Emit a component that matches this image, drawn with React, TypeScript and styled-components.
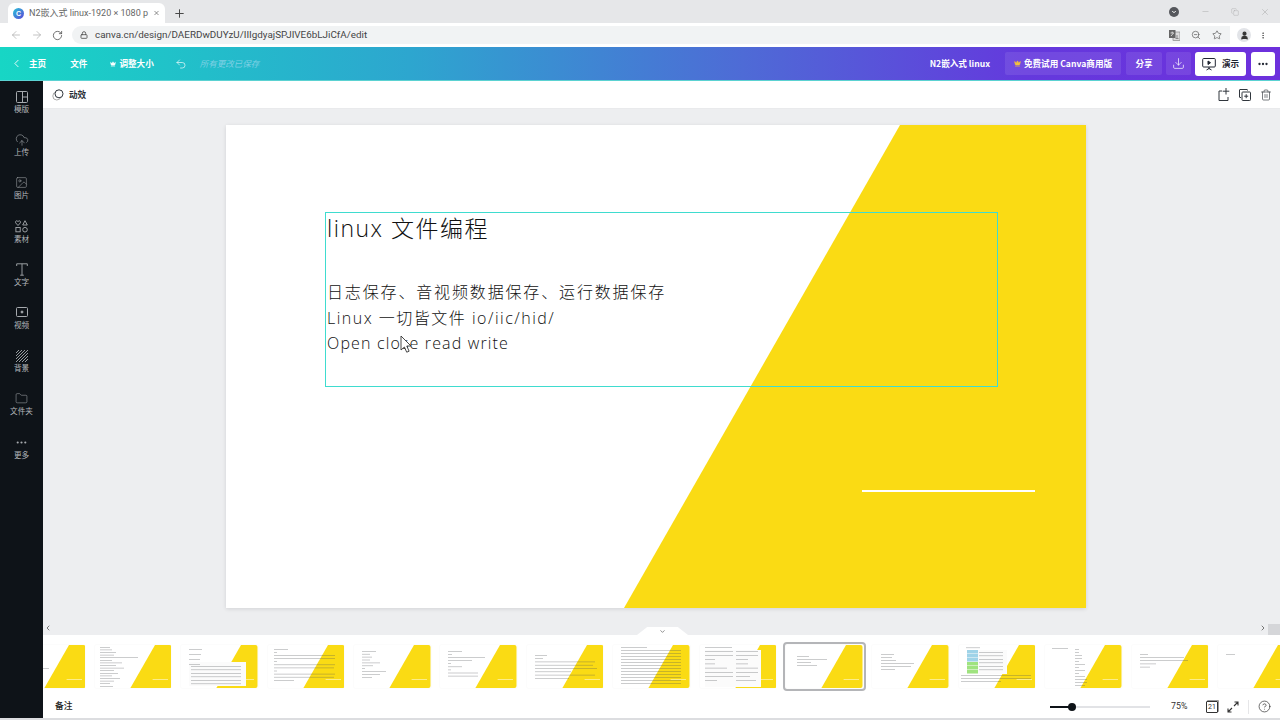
import React from "react";
import styled, { createGlobalStyle } from "styled-components";
import {
  ArrowLeft, ArrowRight, RotateCw, Lock, ZoomOut, Star, User, EllipsisVertical, Plus, X, Minus,
  ChevronLeft, ChevronRight, ChevronDown, Crown, Undo2, Download, Ellipsis, CloudUpload, Image as ImageIcon, Folder,
  Trash2, CircleHelp, Copy,
} from "lucide-react";

const UI = `"Noto Sans CJK SC", "Noto Sans", sans-serif`;
const Global = createGlobalStyle`
  html, body { margin: 0; padding: 0; background: #fff; }
  body { font-family: "Open Sans", ${UI}; overflow: hidden; }
  * { box-sizing: border-box; }
`;

const Page = styled.div`width: 1280px; height: 720px; display: flex; flex-direction: column; overflow: hidden; background: #dcdde0;`;

/* browser chrome */
const TabStrip = styled.div`height: 23px; background: #e6e7e9; display: flex; align-items: flex-end; padding-left: 8px; color: #555;`;
const Tab = styled.div`width: 157px; height: 20px; background: #fff; border-radius: 6px 6px 0 0; display: flex; align-items: center; padding: 0 5px; gap: 5px;`;
const Favicon = styled.div`width: 11px; height: 11px; border-radius: 50%; background: linear-gradient(135deg, #27c4d8, #5b45d8); color: #fff; font: 700 7px/11px "Liberation Sans", sans-serif; text-align: center; flex: none;`;
const TabTitle = styled.div`flex: 1; font: 400 9px/20px "Roboto", ${UI}; color: #666; white-space: nowrap;`;
const NewTab = styled.div`margin: 0 0 3px 8px; display: flex; color: #444;`;
const Spring = styled.div`flex: 1;`;
const WinControls = styled.div`display: flex; align-items: center; height: 23px; color: #999;`;
const ProfileDot = styled.div`width: 10px; height: 10px; border-radius: 50%; background: #55575c; margin-right: 11px; display: flex; align-items: center; justify-content: center; color: #fff;`;
const WinBtn = styled.div`width: 30px; display: flex; justify-content: center;`;

const AddressBar = styled.div`height: 24px; background: #fff; display: flex; align-items: center; color: #777; padding: 0 10px 0 5px;`;
const NavIcon = styled.div<{ $w?: number }>`width: ${(p) => p.$w ?? 21}px; display: flex; justify-content: center; flex: none;`;
const UrlField = styled.div`margin-left: 4px; width: 1158px; height: 18px; border-radius: 9px 0 0 9px; background: #f1f3f4; display: flex; align-items: center; padding: 0 3px 0 8px; color: #555;`;
const UrlText = styled.div`margin-left: 7px; font: 400 9.85px/18px "Roboto", sans-serif; color: #444;`;
const Avatar = styled.div`width: 14px; height: 14px; border-radius: 50%; background: #e2e4e8; display: flex; align-items: center; justify-content: center; color: #333; margin: 0 8px 0 7px; flex:none;`;

/* canva top bar */
const TopBar = styled.div`height: 34px; background: linear-gradient(90deg, #17d6c5 0%, #2da6cf 32%, #4e6bd6 58%, #6439dd 80%, #6d30dc 100%); display: flex; align-items: center; color: #fff; font: 700 8.6px/1 ${UI}; padding: 0 5px 0 10px; border-bottom: 1px solid #5bd2d2;`;
const TopItem = styled.div<{ $left?: number }>`display: flex; align-items: center; gap: 3px; margin-left: ${(p) => p.$left ?? 0}px; white-space: nowrap;`;
const Saved = styled.div`margin-left: 13px; font: italic 400 8.5px/1 ${UI}; color: #7fd0e4; white-space: nowrap;`;
const TopBtn = styled.div<{ $w: number; $left?: number }>`width: ${(p) => p.$w}px; margin-left: ${(p) => p.$left ?? 4}px; height: 23px; border-radius: 2px; background: rgba(255,255,255,.09); display: flex; align-items: center; justify-content: center; gap: 3px; white-space: nowrap;`;
const WhiteBtn = styled.div<{ $w: number; $left?: number }>`width: ${(p) => p.$w}px; margin-left: ${(p) => p.$left ?? 4}px; height: 24px; border-radius: 3px; background: #fff; color: #1f2430; display: flex; align-items: center; justify-content: center; gap: 6px;`;

/* body */
const Body = styled.div`height: 637px; display: flex;`;
const Sidebar = styled.nav`width: 43px; background: #0e1318; flex: none;`;
const SideItem = styled.div`height: 43.2px; padding-top: 9px; display: flex; flex-direction: column; align-items: center; color: #a6aaae;`;
const SideIcon = styled.div`height: 13px; display: flex; align-items: center; justify-content: center;`;
const SideLabel = styled.div`font: 400 7.6px/11px ${UI}; color: #b4b7bb; white-space: nowrap;`;

const Main = styled.main`flex: 1; min-width: 0; display: flex; flex-direction: column;`;
const ContextBar = styled.div`height: 28px; background: #fff; border-bottom: 1px solid #e9eaec; display: flex; align-items: center; padding: 0 8px 0 9px; color: #30363d; flex: none;`;
const Effect = styled.div`display: flex; align-items: center; gap: 5px; font: 700 8.6px/1 ${UI}; color: #2a2f36;`;
const ContextIcons = styled.div`margin-left: auto; display: flex; gap: 9px; align-items: center;`;

const Stage = styled.div`position: relative; height: 526px; background: #edeef0; padding: 16px 0 0 183px; flex: none;`;
const Slide = styled.section`position: relative; width: 860px; height: 483px; background: #fff; box-shadow: 0 1px 4px rgba(14,19,24,.12); padding: 87px 0 0 99px;`;
const Art = styled.svg`position: absolute; inset: 0; width: 100%; height: 100%;`;
const TextFrame = styled.div`position: relative; width: 673px; height: 175px; border: 1px solid #3fdccf; padding-left: 1px; color: #111; font-family: "Open Sans", ${UI}; font-weight: 300;`;
const Title = styled.div`font-size: 23px; line-height: 30px; letter-spacing: 1.5px; white-space: nowrap;`;
const Line = styled.div<{ $ls: number }>`font-size: 16px; line-height: 25.5px; letter-spacing: ${(p) => p.$ls}px; white-space: nowrap;`;
const Lines = styled.div`margin-top: 37px;`;
const Pointer = styled.svg`position: absolute; left: 74px; top: 122px; width: 13px; height: 19px;`;

const ScrollArrow = styled.div<{ $side: string }>`position: absolute; bottom: 1px; ${(p) => p.$side}: 1px; color: #777; display: flex; align-items: center; height: 12px;`;
const ScrollThumb = styled.div`position: absolute; right: 0; bottom: 0; width: 12px; height: 11px; background: #d5d6d9;`;
const Handle = styled.div`position: absolute; left: 594px; bottom: 0; width: 51px; height: 8px; background: #fff; clip-path: polygon(0 100%, 20% 0, 80% 0, 100% 100%); color: #444; display: flex; justify-content: center; align-items: flex-end;`;

const Strip = styled.div`height: 60px; background: #fff; overflow: hidden; flex: none; padding-top: 10px;`;
const ThumbRow = styled.div`display: flex; gap: 9.9px; margin-left: -34.5px; width: max-content;`;
const ThumbBox = styled.div<{ $active?: boolean }>`width: 76.5px; height: 43px; flex: none; background: #fff; box-shadow: 0 0 2px rgba(14,19,24,.06); outline: ${(p) => (p.$active ? "2px solid #b4b5b8" : "none")}; outline-offset: 1px; border-radius: 1px;`;
const ThumbSvg = styled.svg`display: block; width: 100%; height: 100%;`;

const Footer = styled.div`height: 23px; background: #fff; display: flex; align-items: center; padding: 0 9px 0 12px; color: #333; flex: none;`;
const Notes = styled.div`font: 500 8.8px/1 ${UI}; color: #222;`;
const ZoomTrack = styled.div`margin-left: auto; width: 100px; height: 2px; background: #e2e3e6; position: relative;`;
const ZoomFill = styled.div`width: 22px; height: 2px; background: #0e1318;`;
const ZoomKnob = styled.div`position: absolute; left: 18px; top: -3px; width: 8px; height: 8px; border-radius: 50%; background: #0e1318;`;
const ZoomValue = styled.div`margin-left: 21px; width: 16px; font: 400 8.8px/1 "Roboto", sans-serif; color: #333; white-space: nowrap;`;
const PageCount = styled.div`margin-left: 19px; width: 12px; height: 12px; border: 1px solid #333; border-radius: 1px; font: 400 7px/10px "Roboto", sans-serif; text-align: center; box-shadow: 1px -1px 0 #999;`;
const FootIcon = styled.div<{ $left: number }>`margin-left: ${(p) => p.$left}px; display: flex;`;
const Divider = styled.div`width: 1px; height: 14px; background: #e6e6e8; margin-left: 9px;`;

/* drawings */
const TemplatesIcon = () => (
  <svg width="12" height="12" viewBox="0 0 12 12" fill="none" stroke="currentColor"><rect x=".5" y=".5" width="11" height="11" rx="1" /><path d="M6.5 .5v11M6.5 6h5" /></svg>
);
const ElementsIcon = () => (
  <svg width="13" height="13" viewBox="0 0 13 13" fill="none" stroke="currentColor" strokeWidth=".9"><path d="M3 5.5 .7 2.9C0 1.8 1 .6 2 .8c.5.1.8.4 1 .8.2-.4.5-.7 1-.8 1-.2 2 1 1.3 2.1z" /><path d="M10 .7l2.3 4.3H7.7z" /><rect x=".9" y="7.5" width="4.3" height="4.3" /><circle cx="10" cy="9.7" r="2.3" /></svg>
);
const TextIcon = () => (
  <svg width="12" height="13" viewBox="0 0 12 13" fill="none" stroke="currentColor" strokeWidth=".9"><path d="M.7 3V.8h10.6V3M6 .8v11.4M4.2 12.2h3.6" /></svg>
);
const VideoIcon = () => (
  <svg width="12" height="10" viewBox="0 0 12 10" fill="none" stroke="currentColor"><rect x=".5" y=".5" width="11" height="9" rx="1" /><circle cx="6" cy="5" r="1" fill="currentColor" /></svg>
);
const HatchIcon = () => (
  <svg width="12" height="12" viewBox="0 0 12 12" stroke="currentColor" strokeWidth=".9"><path d="M0 3 3 0M0 6 6 0M0 9 9 0M0 12 12 0M3 12 12 3M6 12 12 6M9 12 12 9" /></svg>
);
const EffectIcon = () => (
  <svg width="12" height="12" viewBox="0 0 12 12" fill="none"><circle cx="4.8" cy="7" r="4" stroke="#aaa" /><circle cx="7" cy="4.8" r="4" fill="#fff" stroke="#30363d" /></svg>
);
const AddPageIcon = () => (
  <svg width="12" height="13" viewBox="0 0 12 13" fill="none" stroke="currentColor"><path d="M4 3H1v9.5h9V9M8 0v6.5M4.7 3.2h6.6" /></svg>
);
const DuplicateIcon = () => (
  <svg width="12" height="12" viewBox="0 0 12 12" fill="none" stroke="currentColor"><path d="M8.5 1.5V1a.5.5 0 0 0-.5-.5H1A.5.5 0 0 0 .5 1v7a.5.5 0 0 0 .5.5h1" /><rect x="3" y="3" width="8.5" height="8.5" rx=".8" /><path d="M7.2 5.2v4M5.2 7.2h4" /></svg>
);
const PresentIcon = () => (
  <svg width="14" height="14" viewBox="0 0 14 14" fill="none" stroke="currentColor"><rect x=".7" y="1.5" width="12.6" height="8.5" rx="1" /><path d="M6 4l2.5 1.7L6 7.5z" fill="currentColor" /><path d="M7 10v2M4.5 13 7 11.5 9.5 13" /></svg>
);
const TranslateIcon = () => (
  <svg width="11" height="11" viewBox="0 0 11 11" style={{ marginRight: 5 }}><rect x="4" y="2" width="7" height="8.5" fill="#ddd" stroke="#777" strokeWidth=".6" /><rect x="0" y="0" width="6.5" height="8" fill="#666" /><path d="M1.5 3h3.5M3.2 1.6v1.4M2 6l2.4-2.8" stroke="#fff" strokeWidth=".7" /><path d="M6.5 8.5h3M8 5v3" stroke="#666" strokeWidth=".7" /></svg>
);
const ExpandDiagonalIcon = () => (
  <svg width="12" height="12" viewBox="0 0 12 12" fill="none" stroke="currentColor" strokeWidth="1.1"><path d="M7 5l4-4M7.5 1H11v3.5M5 7l-4 4M1 7.5V11h3.5" /></svg>
);

type TextLine = [number, number, number];
type Cell = [number, number, number, number, string];
const para = (x: number, y: number, step: number, widths: number[]): TextLine[] => widths.map((w, i) => [x, y + i * step, w]);
const thumbs: { lines: TextLine[]; cover?: [number, number, number, number]; cells?: Cell[] }[] = [
  { lines: para(0, 23, 3, [40, 30, 26]) },
  { lines: para(5, 2, 2.6, [10, 12, 16, 14, 38, 12, 22, 16, 24, 14, 18, 12, 20, 14, 10, 13]) },
  { lines: [...para(8, 4, 5, [13, 12, 11, 11]), ...para(10, 21, 3.5, [50, 50, 50, 50, 50, 50])], cover: [8, 17, 57, 24] },
  { lines: para(6, 4, 3.1, [14, 3, 61, 61, 3, 61, 60, 3, 61, 60, 20]) },
  { lines: para(8, 6, 2.9, [14, 8, 10, 8, 18, 11, 3, 24, 18, 10]) },
  { lines: para(8, 6, 3.1, [14, 4, 37, 24, 3, 14, 3, 30, 30]) },
  { lines: para(8, 10, 3.3, [12, 8, 60, 58, 62, 36, 60, 34]) },
  { lines: para(8, 2, 3, [26, 60, 60, 60, 60, 60, 60, 60, 60, 60, 60, 60, 60]) },
  { lines: [...para(5, 2, 3.4, [27]), ...para(5, 6, 4.2, [28, 28, 10, 10, 22, 28, 28, 12]), ...para(36, 6, 4.2, [22, 22, 12, 12, 22, 22, 14, 20])], cover: [5, 5, 56, 37] },
  { lines: para(11, 11, 3, [12, 30, 14, 20]) },
  { lines: para(9, 9, 3, [13, 11, 15, 33, 30, 14]) },
  {
    lines: [...para(7, 2.5, 3, [14]), ...para(20, 7, 3.5, [24, 24, 24, 24, 24, 24]), ...para(2, 30, 3, [70, 70, 40])],
    cover: [8, 5, 40, 24],
    cells: [
      [8, 5, 11, 3.5, "#9fd3e8"], [8, 9, 11, 3.5, "#9fd3e8"], [8, 13, 11, 3.5, "#9fd3e8"],
      [8, 17, 11, 3.5, "#9fe37f"], [8, 21, 11, 3.5, "#9fe37f"], [8, 25, 11, 3.5, "#9fe37f"],
    ],
  },
  { lines: [...para(7, 3, 3, [16]), ...para(30, 4, 3, [4, 4, 7, 7, 4, 10, 4, 10, 4, 10, 12, 12, 10])] },
  { lines: para(8, 9, 3.2, [8, 44, 48, 16, 10]) },
  { lines: para(8, 9, 3, [9]) },
];

const Thumb = ({ t, active }: { t: (typeof thumbs)[number]; active?: boolean }) => (
  <ThumbBox $active={active}>
    <ThumbSvg viewBox="0 0 76.5 43">
      <path d="M60 0H74.5a2 2 0 0 1 2 2V41a2 2 0 0 1-2 2H35.4z" fill="#fadb14" />
      <rect x="57.6" y="34.3" width="15.4" height=".5" fill="#fff" />
      {t.cover && <rect x={t.cover[0]} y={t.cover[1]} width={t.cover[2]} height={t.cover[3]} fill="#fbfbfb" />}
      {t.cells?.map((c, i) => <rect key={i} x={c[0]} y={c[1]} width={c[2]} height={c[3]} fill={c[4]} />)}
      {t.lines.map((l, i) => (
        <rect key={i} x={l[0]} y={l[1]} width={l[2]} height=".6" fill="#55585c" opacity=".5" />
      ))}
    </ThumbSvg>
  </ThumbBox>
);

const sideItems: [React.ReactNode, string][] = [
  [<TemplatesIcon />, "模版"],
  [<CloudUpload size={14} strokeWidth={1} />, "上传"],
  [<ImageIcon size={13} strokeWidth={1} />, "图片"],
  [<ElementsIcon />, "素材"],
  [<TextIcon />, "文字"],
  [<VideoIcon />, "视频"],
  [<HatchIcon />, "背景"],
  [<Folder size={13} strokeWidth={1} />, "文件夹"],
  [<Ellipsis size={13} strokeWidth={2} />, "更多"],
];

export default function App() {
  return (
    <Page>
      <Global />
      <TabStrip>
        <Tab>
          <Favicon>C</Favicon>
          <TabTitle>N2嵌入式 linux-1920 × 1080 p</TabTitle>
          <X size={10} strokeWidth={2} color="#444" />
        </Tab>
        <NewTab><Plus size={13} strokeWidth={1.8} /></NewTab>
        <Spring />
        <WinControls>
          <ProfileDot><ChevronDown size={6} strokeWidth={4} /></ProfileDot>
          <WinBtn><Minus size={9} strokeWidth={1} /></WinBtn>
          <WinBtn><Copy size={8} strokeWidth={1} /></WinBtn>
          <WinBtn><X size={10} strokeWidth={1} /></WinBtn>
        </WinControls>
      </TabStrip>
      <AddressBar>
        <NavIcon><ArrowLeft size={12} strokeWidth={1.4} color="#aaa" /></NavIcon>
        <NavIcon><ArrowRight size={12} strokeWidth={1.4} color="#aaa" /></NavIcon>
        <NavIcon><RotateCw size={11} strokeWidth={1.8} color="#555" /></NavIcon>
        <UrlField>
          <Lock size={8} strokeWidth={2.6} />
          <UrlText>canva.cn/design/DAERDwDUYzU/IIIgdyajSPJIVE6bLJiCfA/edit</UrlText>
          <Spring />
          <TranslateIcon />
          <NavIcon><ZoomOut size={10} strokeWidth={1.6} /></NavIcon>
          <NavIcon><Star size={10} strokeWidth={1.6} /></NavIcon>
        </UrlField>
        <Avatar><User size={9} strokeWidth={3} fill="#333" /></Avatar>
        <NavIcon $w={8}><EllipsisVertical size={11} strokeWidth={2.4} color="#555" /></NavIcon>
      </AddressBar>
      <TopBar>
        <TopItem><ChevronLeft size={13} strokeWidth={1.6} /></TopItem>
        <TopItem $left={6}>主页</TopItem>
        <TopItem $left={24}>文件</TopItem>
        <TopItem $left={23}><Crown size={6} fill="#fff" />调整大小</TopItem>
        <TopItem $left={21}><Undo2 size={12} strokeWidth={1.3} /></TopItem>
        <Saved>所有更改已保存</Saved>
        <Spring />
        <TopItem>N2嵌入式 linux</TopItem>
        <TopBtn $w={116} $left={15}><Crown size={7} fill="#f3c13c" color="#f3c13c" />免费试用 Canva商用版</TopBtn>
        <TopBtn $w={36} $left={5}>分享</TopBtn>
        <TopBtn $w={25}><Download size={13} strokeWidth={1.3} /></TopBtn>
        <WhiteBtn $w={51}><PresentIcon />演示</WhiteBtn>
        <WhiteBtn $w={24} $left={5}><Ellipsis size={12} strokeWidth={2.6} /></WhiteBtn>
      </TopBar>
      <Body>
        <Sidebar>
          {sideItems.map(([icon, label]) => (
            <SideItem key={label}>
              <SideIcon>{icon}</SideIcon>
              <SideLabel>{label}</SideLabel>
            </SideItem>
          ))}
        </Sidebar>
        <Main>
          <ContextBar>
            <Effect><EffectIcon />动效</Effect>
            <ContextIcons>
              <AddPageIcon />
              <DuplicateIcon />
              <Trash2 size={12} strokeWidth={1.3} />
            </ContextIcons>
          </ContextBar>
          <Stage>
            <Slide>
              <Art viewBox="0 0 860 483">
                <path d="M674 0H860V483H398z" fill="#fadb14" />
                <rect x="636" y="365" width="173" height="2" fill="#fff" />
              </Art>
              <TextFrame>
                <Title>linux 文件编程</Title>
                <Lines>
                  <Line $ls={1.85}>日志保存、音视频数据保存、运行数据保存</Line>
                  <Line $ls={1.5}>Linux 一切皆文件 io/iic/hid/</Line>
                  <Line $ls={1.15}>Open close read write</Line>
                </Lines>
                <Pointer viewBox="0 0 13 19">
                  <path d="M1 1v14l3.4-3 2.3 5.2 2.4-1-2.3-5.2H11z" fill="#fff" stroke="#333" strokeWidth=".9" />
                </Pointer>
              </TextFrame>
            </Slide>
            <ScrollArrow $side="left"><ChevronLeft size={8} strokeWidth={3} /></ScrollArrow>
            <ScrollArrow $side="right"><ChevronRight size={8} strokeWidth={3} style={{ marginRight: 12 }} /></ScrollArrow>
            <ScrollThumb />
            <Handle><ChevronDown size={7} strokeWidth={2} /></Handle>
          </Stage>
          <Strip>
            <ThumbRow>
              {thumbs.map((t, i) => <Thumb key={i} t={t} active={i === 9} />)}
            </ThumbRow>
          </Strip>
          <Footer>
            <Notes>备注</Notes>
            <ZoomTrack><ZoomFill /><ZoomKnob /></ZoomTrack>
            <ZoomValue>75%</ZoomValue>
            <PageCount>21</PageCount>
            <FootIcon $left={9}><ExpandDiagonalIcon /></FootIcon>
            <Divider />
            <FootIcon $left={9}><CircleHelp size={13} strokeWidth={1.3} /></FootIcon>
          </Footer>
        </Main>
      </Body>
    </Page>
  );
}
